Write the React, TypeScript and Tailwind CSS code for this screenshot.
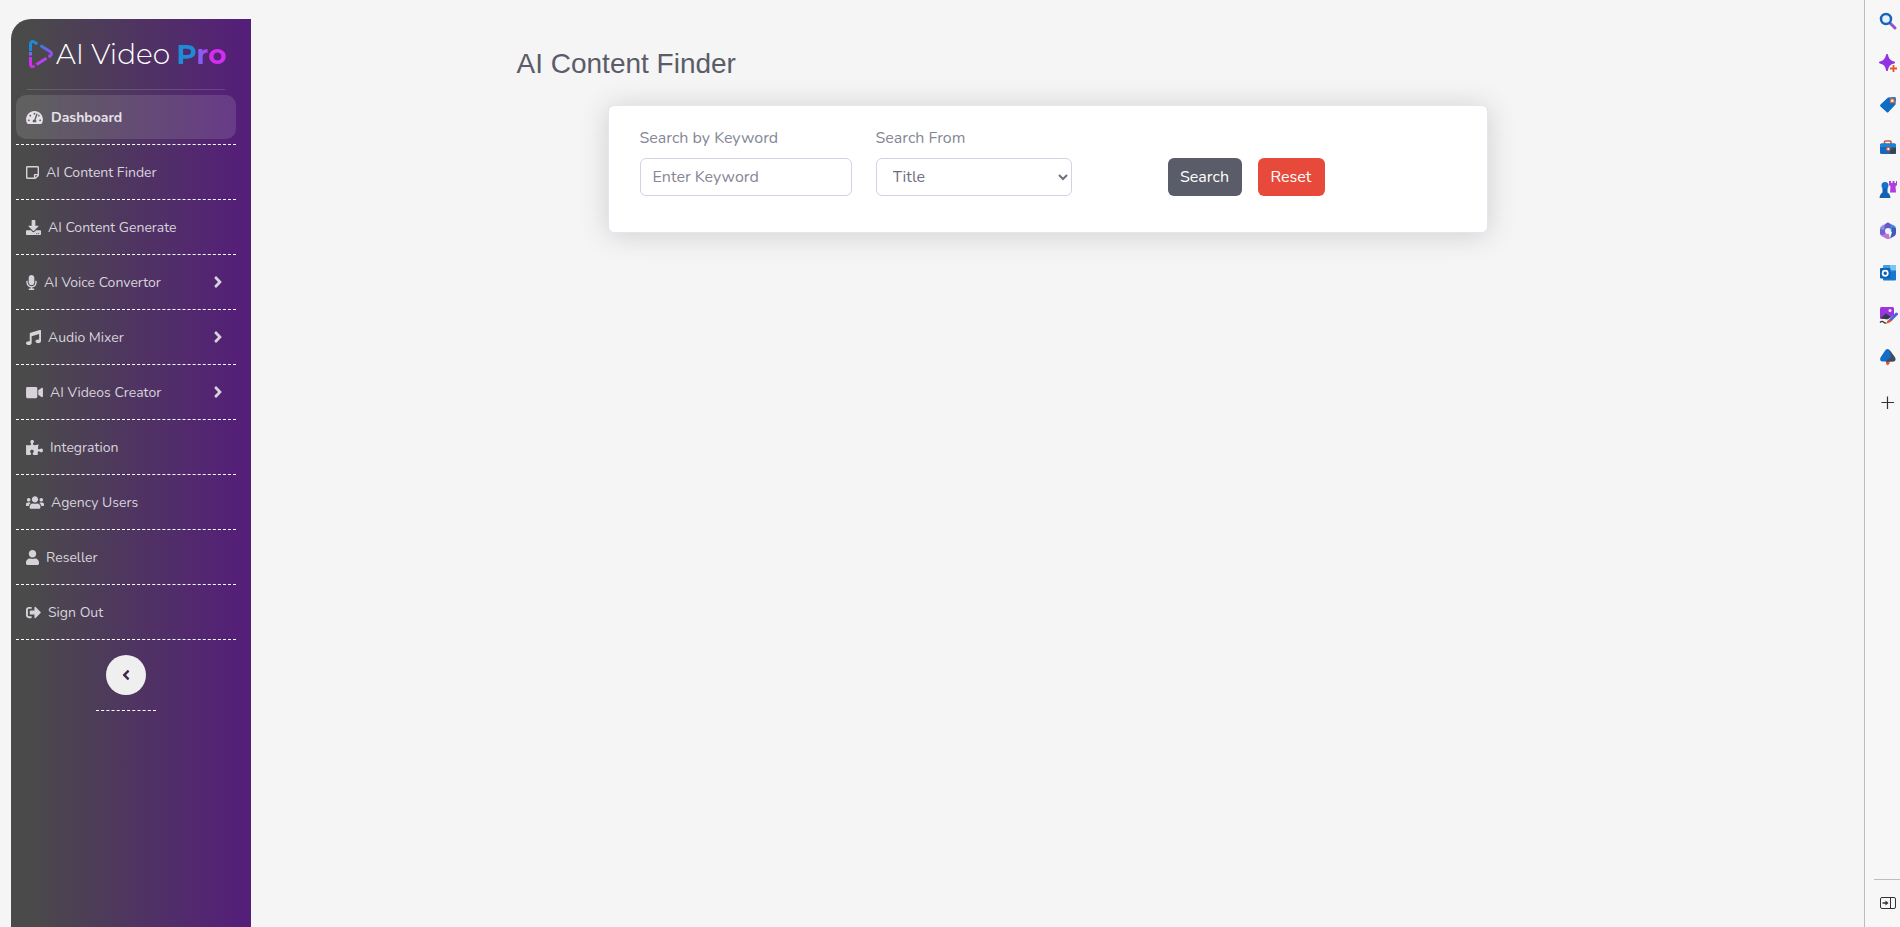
import type { ReactNode } from "react";
import type { IconType } from "react-icons";
import {
  FaAngleLeft,
  FaAngleRight,
  FaDownload,
  FaMicrophone,
  FaMusic,
  FaPuzzlePiece,
  FaRegStickyNote,
  FaSignOutAlt,
  FaTachometerAlt,
  FaUser,
  FaUsers,
  FaVideo,
} from "react-icons/fa";

type NavItem = { label: string; icon: IconType; size: string; active?: boolean; expandable?: boolean };

const navItems: NavItem[] = [
  { label: "Dashboard", icon: FaTachometerAlt, size: "h-[15px] w-[17px]", active: true },
  { label: "AI Content Finder", icon: FaRegStickyNote, size: "h-[15px] w-[13px]" },
  { label: "AI Content Generate", icon: FaDownload, size: "h-[15px] w-[15px]" },
  { label: "AI Voice Convertor", icon: FaMicrophone, size: "h-[15px] w-[11px]", expandable: true },
  { label: "Audio Mixer", icon: FaMusic, size: "h-[15px] w-[15px]", expandable: true },
  { label: "AI Videos Creator", icon: FaVideo, size: "h-[15px] w-[17px]", expandable: true },
  { label: "Integration", icon: FaPuzzlePiece, size: "h-[15px] w-[17px]" },
  { label: "Agency Users", icon: FaUsers, size: "h-[15px] w-[18px]" },
  { label: "Reseller", icon: FaUser, size: "h-[15px] w-[13px]" },
  { label: "Sign Out", icon: FaSignOutAlt, size: "h-[15px] w-[15px]" },
];

function Logo() {
  return (
    <a href="#" className="flex h-[70px] items-center pl-3" aria-label="AI Video Pro">
      <svg width="26" height="30" viewBox="0 0 26 30" fill="none" strokeWidth="3" strokeLinejoin="round">
        <defs>
          <linearGradient id="edge" gradientUnits="userSpaceOnUse" x1="4" y1="2" x2="24" y2="15">
            <stop offset="0.3" stopColor="#1f8ad6" />
            <stop offset="1" stopColor="#a04af4" />
          </linearGradient>
          <linearGradient id="base" gradientUnits="userSpaceOnUse" x1="6" y1="27" x2="24" y2="13">
            <stop offset="0" stopColor="#d42df2" />
            <stop offset="1" stopColor="#8f58f4" />
          </linearGradient>
        </defs>
        <path d="M2.500 12V5.500Q2.500 1.500 6 3L9.500 4.800" stroke="#1f8ad6" />
        <path d="M12.500 6.600 22 12.500Q25 14.800 22 17L20.500 18" stroke="url(#edge)" />
        <path d="M18.500 19.200 8.500 25.600" stroke="url(#base)" />
        <path d="M6.500 27Q2.500 29 2.500 25V18" stroke="#d42df2" />
        <path d="M2.500 16.500V13" stroke="#6f6cf0" />
      </svg>
      <span className="flex items-baseline gap-1.5 pl-[2px] font-[Montserrat,Lato,sans-serif] text-[28px] leading-9">
        <span className="font-light text-white">AI Video</span>
        <span className="bg-[linear-gradient(90deg,#1f8ad6_38%,#8a5cf5_42%,#8a5cf5_54%,#d42df2_64%)] bg-clip-text font-bold text-transparent">
          Pro
        </span>
      </span>
    </a>
  );
}

function Sidebar() {
  return (
    <aside className="mt-[19px] ml-[11px] flex w-60 shrink-0 flex-col rounded-tl-[20px] bg-[linear-gradient(90deg,#4a4a4a_8%,#541f78_95%)] pl-[5px]">
      <Logo />
      <div className="mr-[26px] ml-[11px] h-px bg-white/15" />
      <nav className="w-[220px]">
        <ul>
          {navItems.map(({ label, icon: Icon, size, active, expandable }) => (
            <li key={label} className="border-b border-dashed border-white py-[5px]">
              <a
                href="#"
                className={
                  active
                    ? "flex h-11 items-center gap-2 rounded-[10px] bg-white/12 px-[10px] text-sm font-bold text-[#e6e1e8]"
                    : "flex h-11 items-center gap-[7px] px-[10px] text-sm text-[#d8d3db]"
                }
              >
                <Icon className={size} />
                <span className="grow pt-0.5">{label}</span>
                {expandable && <FaAngleRight className="mr-[3px] h-[18px] w-[10px]" />}
              </a>
            </li>
          ))}
        </ul>
        <div className="mx-auto mt-[15px] flex w-[60px] justify-center border-b border-dashed border-white pb-[15px]">
          <button
            type="button"
            aria-label="Collapse menu"
            className="flex size-10 items-center justify-center rounded-full bg-[#efefef] text-[#3d2b45]"
          >
            <FaAngleLeft className="h-4 w-4" />
          </button>
        </div>
      </nav>
    </aside>
  );
}

function SearchCard() {
  const control =
    "h-[38px] w-full rounded-md border border-[#d1d3e2] bg-white text-base text-[#6e707e] placeholder:text-[#858796]";
  return (
    <form className="mx-auto flex min-h-[128px] max-w-[880px] items-start rounded-md border border-[#e3e6f0] bg-white px-[31px] pt-5 shadow-[0_2px_28px_rgba(58,59,69,0.2)]">
      <div className="flex w-[212px] flex-col gap-2">
        <label htmlFor="keyword">Search by Keyword</label>
        <input id="keyword" type="text" placeholder="Enter Keyword" className={`${control} px-3`} />
      </div>
      <div className="ml-6 flex w-[196px] flex-col gap-2">
        <label htmlFor="source">Search From</label>
        <select id="source" className={`${control} pl-3`}>
          <option>Title</option>
        </select>
      </div>
      <div className="mt-8 ml-24 flex gap-4 text-white">
        <button type="submit" className="h-[38px] w-[74px] rounded-md bg-[#5a5c69]">
          Search
        </button>
        <button type="reset" className="h-[38px] w-[67px] rounded-md bg-[#e74a3b]">
          Reset
        </button>
      </div>
    </form>
  );
}

function Glyph({ children }: { children: ReactNode }) {
  return (
    <svg width="20" height="20" viewBox="0 0 20 20" fill="none">
      {children}
    </svg>
  );
}

const tools: { label: string; drawing: ReactNode }[] = [
  {
    label: "Search",
    drawing: (
      <>
        <path d="M12.500 12.500 17 17" stroke="#9352cf" strokeWidth="3" strokeLinecap="round" />
        <circle cx="8" cy="8" r="5" stroke="#1565b8" strokeWidth="2.500" fill="#e4f1fb" />
      </>
    ),
  },
  {
    label: "Discover",
    drawing: (
      <>
        <path d="M9 2Q10 8.500 16 9.500Q10 10.500 9 17Q8 10.500 2 9.500Q8 8.500 9 2Z" fill="#9333e0" stroke="#9333e0" strokeWidth="2" strokeLinejoin="round" />
        <path d="M15.500 12v7M12 15.500h7" stroke="#e8532a" strokeWidth="1.800" />
      </>
    ),
  },
  {
    label: "Shopping",
    drawing: (
      <>
        <path d="M10 2.500 16.500 2Q18 2 18 3.500L17.500 9.500 10.500 17Q9.500 18 8.500 17L2.500 11.500Q1.500 10.500 2.500 9.500Z" fill="#0f6cc4" />
        <rect x="12.500" y="4" width="3.500" height="3.500" fill="#fff" stroke="#e8683c" strokeWidth="1.300" />
      </>
    ),
  },
  {
    label: "Tools",
    drawing: (
      <>
        <path d="M6.500 7V5Q6.500 4 7.500 4H12Q13 4 13 5V7" stroke="#d9532c" strokeWidth="1.600" />
        <rect x="2" y="6.500" width="16" height="10.500" rx="1.500" fill="#1269bd" />
        <path d="M2 8Q2 6.500 3.500 6.500H16.500Q18 6.500 18 8V10H2Z" fill="#1b83d8" />
        <path d="M12 17V13L15 11H18V15.500Q18 17 16.500 17Z" fill="#3a4450" />
        <circle cx="10.300" cy="12" r="1.700" fill="#fff" stroke="#e8532a" strokeWidth="1.200" />
      </>
    ),
  },
  {
    label: "Games",
    drawing: (
      <>
        <path d="M11 2h2v2h1.500V2h2v2H18V2h1v4l-1.500 1.500.5 6h-6l.5-6L11 6Z" fill="#b13be0" />
        <circle cx="7" cy="6.500" r="3.500" fill="#1473ca" />
        <path d="M4.500 9h5L9.500 13.500Q12 14.500 12.500 19H1.500Q2 14.500 4.500 13.500Z" fill="#0f62b4" />
      </>
    ),
  },
  {
    label: "Microsoft 365",
    drawing: (
      <>
        <path d="M10 1.500 16 4.500Q18 5.500 18 7.500V12L10 10Z" fill="#4d86dd" />
        <path d="M10 1.500Q8 2 7 3L3.500 5Q2 6 2 8V12L10 10Z" fill="#8b8de8" />
        <path d="M10 1.500Q6.500 3 6.500 6V10L10 10 13 4.500Z" fill="#6757c9" />
        <path d="M2 8V12Q2 14 3.500 15L8 17.500Q10 18.500 12 17.500L10 10Z" fill="#c078cf" />
        <path d="M2 8V12.500Q3 15 6 13.500L10 10Z" fill="#6f63dc" />
        <path d="M18 7.500V12Q18 14 16.500 15L12 17.500 14 11V6Z" fill="#3d5bb8" />
        <circle cx="10" cy="10" r="3" fill="#f3f2fa" />
      </>
    ),
  },
  {
    label: "Outlook",
    drawing: (
      <>
        <rect x="5" y="2" width="13" height="9" rx="1" fill="#3da0e6" />
        <path d="M12 2h5q1 0 1 1v4h-6Z" fill="#7cc4f2" />
        <path d="M5 9 18 8V16.500Q18 17.500 17 17.500H6Q5 17.500 5 16.500Z" fill="#1478d0" />
        <rect x="2" y="5" width="10.500" height="10.500" rx="1" fill="#0d62b5" />
        <circle cx="7.200" cy="10.200" r="2.600" stroke="#fff" strokeWidth="1.700" />
      </>
    ),
  },
  {
    label: "Image creator",
    drawing: (
      <>
        <path d="M3.500 2H14.500Q16 2 16 3.500V10L10 14H3.500Q2 14 2 12.500V3.500Q2 2 3.500 2Z" fill="#9b35e0" />
        <path d="M2.500 13 8 8.500 13 12 9 14.500Z" fill="#333b47" />
        <circle cx="12" cy="5.500" r="1.500" fill="#f4e3ff" />
        <path d="M2 17.500Q4 15.500 5.500 17T8.500 18" stroke="#333" strokeWidth="1.300" />
        <path d="M12.500 15 18.500 9" stroke="#4b62dc" strokeWidth="3" strokeLinecap="round" />
        <path d="M8.500 18.500Q9 14.500 12 14.500 15 17 8.500 18.500Z" fill="#e8532a" />
      </>
    ),
  },
  {
    label: "Drop",
    drawing: (
      <>
        <path d="M8 13h3.500v3.500L9.700 18.500 8 16.500Z" fill="#e8532a" />
        <path d="M7.500 3Q9.500 1 11.500 3L17 10.500Q18.500 14.500 14.500 14.500H5Q1 14.500 2.500 10.500Z" fill="#136dc5" />
        <path d="M11.500 3 17 10.500Q18.500 14.500 14.500 14.500H7.500L13 10Z" fill="#424b59" />
      </>
    ),
  },
];

function ToolRail() {
  return (
    <aside className="flex w-9 shrink-0 flex-col overflow-hidden border-l border-[#bdbdbd] bg-[#f7f7f7]">
      {tools.map(({ label, drawing }) => (
        <button key={label} type="button" aria-label={label} className="flex h-[42px] items-center pl-[13px]">
          <Glyph>{drawing}</Glyph>
        </button>
      ))}
      <button type="button" aria-label="Add" className="flex h-[50px] items-center pl-[13px]">
        <Glyph>
          <path d="M9.500 3.500V16M3.500 9.500H16" stroke="#333" strokeWidth="1.200" />
        </Glyph>
      </button>
      <div className="mt-auto ml-[9px] h-px bg-[#bdbdbd]" />
      <button type="button" aria-label="Hide sidebar" className="flex h-[47px] items-center pb-0.5 pl-[13px]">
        <Glyph>
          <rect x="2.500" y="4.500" width="15" height="11" rx="1.500" stroke="#333" />
          <path d="M12.500 4.500V15.500" stroke="#333" />
          <path d="M4.500 10H9" stroke="#333" strokeWidth="1.500" />
          <path d="M7.500 7.500 10.500 10 7.500 12.500Z" fill="#333" />
        </Glyph>
      </button>
    </aside>
  );
}

export default function App() {
  return (
    <div className="flex min-h-screen bg-[#f5f5f5] font-[Nunito,Lato,sans-serif] text-base text-[#858796]">
      <Sidebar />
      <main className="min-w-0 grow pt-[47px] pr-5">
        <div className="mx-auto max-w-[1062px]">
          <h1 className="mb-6 font-['Liberation_Sans',Arial,sans-serif] text-[28px] leading-[34px] text-[#5a5c69]">
            AI Content Finder
          </h1>
          <SearchCard />
        </div>
      </main>
      <ToolRail />
    </div>
  );
}
